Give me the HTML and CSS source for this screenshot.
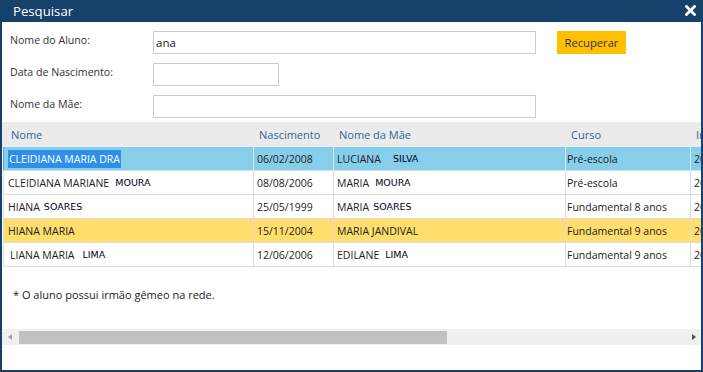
FILE: index.html
```html
<!DOCTYPE html>
<html lang="pt">
<head>
<meta charset="utf-8">
<title>Pesquisar</title>
<link rel="stylesheet" href="styles.css">
</head>
<body>
<div class="win">
  <div class="titlebar">
    <span class="title">Pesquisar</span>
    <svg class="close" width="11" height="11" viewBox="0 0 11 11"><path d="M1.5 1.5 L9.5 9.5 M9.5 1.5 L1.5 9.5" stroke="#fff" stroke-width="2.8" stroke-linecap="square"/></svg>
  </div>
  <div class="form">
    <div class="frow"><span class="lbl">Nome do Aluno:</span><span class="in wide">ana</span><span class="btn">Recuperar</span></div>
    <div class="frow"><span class="lbl">Data de Nascimento:</span><span class="in short"></span></div>
    <div class="frow"><span class="lbl">Nome da Mãe:</span><span class="in wide"></span></div>
  </div>
  <div class="grid">
    <div class="hrow">
      <div class="hc first">Nome</div>
      <div class="hc">Nascimento</div>
      <div class="hc">Nome da Mãe</div>
      <div class="hc">Curso</div>
      <div class="hc">Inscrição</div>
    </div>
    <div class="row sel">
      <div class="c first"><span class="hl">CLEIDIANA MARIA DRA</span></div>
      <div class="c">06/02/2008</div>
      <div class="c">LUCIANA<span class="sn g3">SILVA</span></div>
      <div class="c cur">Pré-escola</div>
      <div class="c">2019</div>
    </div>
    <div class="row">
      <div class="c first">CLEIDIANA MARIANE<span class="sn g1">MOURA</span></div>
      <div class="c">08/08/2006</div>
      <div class="c">MARIA<span class="sn g1">MOURA</span></div>
      <div class="c cur">Pré-escola</div>
      <div class="c">2019</div>
    </div>
    <div class="row">
      <div class="c first">HIANA<span class="sn g0">SOARES</span></div>
      <div class="c">25/05/1999</div>
      <div class="c">MARIA<span class="sn g0">SOARES</span></div>
      <div class="c cur">Fundamental 8 anos</div>
      <div class="c">2019</div>
    </div>
    <div class="row mark">
      <div class="c first">HIANA MARIA</div>
      <div class="c">15/11/2004</div>
      <div class="c">MARIA JANDIVAL</div>
      <div class="c cur">Fundamental 9 anos</div>
      <div class="c">2019</div>
    </div>
    <div class="row">
      <div class="c first ind">LIANA MARIA<span class="sn g2">LIMA</span></div>
      <div class="c">12/06/2006</div>
      <div class="c">EDILANE<span class="sn g1">LIMA</span></div>
      <div class="c cur">Fundamental 9 anos</div>
      <div class="c">2019</div>
    </div>
  </div>
  <p class="note">* O aluno possui irmão gêmeo na rede.</p>
  <div class="hscroll">
    <span class="arr left"></span>
    <span class="thumb"></span>
    <span class="arr right"></span>
  </div>
</div>
</body>
</html>
```
FILE: styles.css
```css
html, body {
  margin: 0;
  padding: 0;
  background: #fff;
}
body {
  font-family: "Open Sans", "Noto Sans", sans-serif;
  font-size: 11px;
  color: #333;
}
.win {
  width: 703px;
  height: 372px;
  box-sizing: border-box;
  border: 2px solid #15416b;
  border-top: 0;
  overflow: hidden;
  display: flex;
  flex-direction: column;
}
.titlebar {
  height: 22px;
  flex: none;
  background: #15416b;
  display: flex;
  align-items: center;
  justify-content: space-between;
  padding: 0 5px 0 11px;
}
.title {
  color: #fff;
  font-size: 13.2px;
  line-height: 22px;
}
.close {
  display: block;
  margin-top: -1px;
}
.form {
  padding: 9px 0 0 8px;
  display: flex;
  flex-direction: column;
  gap: 9px;
}
.frow {
  display: flex;
  align-items: center;
  height: 23px;
}
.lbl {
  width: 143px;
  flex: none;
  color: #333;
  font-size: 10.6px;
  margin-top: -6px;
}
.in {
  height: 23px;
  box-sizing: border-box;
  border: 1px solid #cccccc;
  background: #fff;
  padding: 0 2px;
  line-height: 21px;
  color: #222;
  font-size: 11.5px;
}
.wide { width: 383px; }
.short { width: 126px; }
.btn {
  margin-left: 21px;
  width: 69px;
  height: 23px;
  background: #ffc000;
  color: #333;
  text-align: center;
  line-height: 23px;
  font-size: 11.2px;
}
.grid {
  margin-top: 4px;
  width: 699px;
  overflow: hidden;
}
.hrow {
  display: grid;
  grid-template-columns: 250px 80px 232px 125px 100px;
  height: 25px;
  background: #ebebeb;
  padding-left: 2px;
  width: 900px;
}
.hc {
  color: #2f6797;
  line-height: 26px;
  padding-left: 5px;
  white-space: nowrap;
  font-size: 11px;
}
.hc.first { padding-left: 7px; }
.row {
  display: grid;
  grid-template-columns: 250px 80px 232px 125px 100px;
  height: 24px;
  box-sizing: border-box;
  margin-left: 1px;
  border-left: 1px solid #dcdcdc;
  border-bottom: 1px solid #dcdcdc;
  width: 900px;
  background: #fff;
}
.row.sel {
  background: #87ceeb;
  border-left-color: #5aa9cc;
  border-bottom-color: #c9e8f4;
}
.row.sel .c { border-right-color: #d2ecf6; }
.row.mark { background: #ffde6e; }
.c {
  border-right: 1px solid #dcdcdc;
  padding-left: 3px;
  line-height: 24px;
  height: 23px;
  white-space: nowrap;
  color: #222;
  font-size: 10.5px;
  overflow: hidden;
}
.c.first { padding-left: 4px; }
.c.ind { padding-left: 6px; }
.c.cur { padding-left: 1px; }
.hl {
  background: #2f8fe8;
  color: #fff;
  padding: 2px 1px;
}
.sn {
  font-family: "DejaVu Sans", Verdana, sans-serif;
  font-size: 9.5px;
  color: #000022;
  position: relative;
  top: -1px;
}
.g0 { margin-left: 4px; }
.g1 { margin-left: 6px; }
.g2 { margin-left: 8px; }
.g3 { margin-left: 12px; }
.note {
  margin: 20px 0 0 11px;
  font-size: 11px;
  color: #222;
  line-height: 16px;
}
.hscroll {
  margin-top: 26px;
  height: 16px;
  background: #f0f0f0;
  display: flex;
  align-items: center;
}
.thumb {
  width: 428px;
  height: 13px;
  background: #c1c1c1;
  margin-left: 7px;
}
.arr {
  width: 0;
  height: 0;
  border-top: 3.5px solid transparent;
  border-bottom: 3.5px solid transparent;
}
.arr.left {
  margin-left: 6px;
  border-right: 4px solid #a3a3a3;
}
.arr.right {
  margin-left: auto;
  margin-right: 5px;
  border-left: 4px solid #505050;
}
```
